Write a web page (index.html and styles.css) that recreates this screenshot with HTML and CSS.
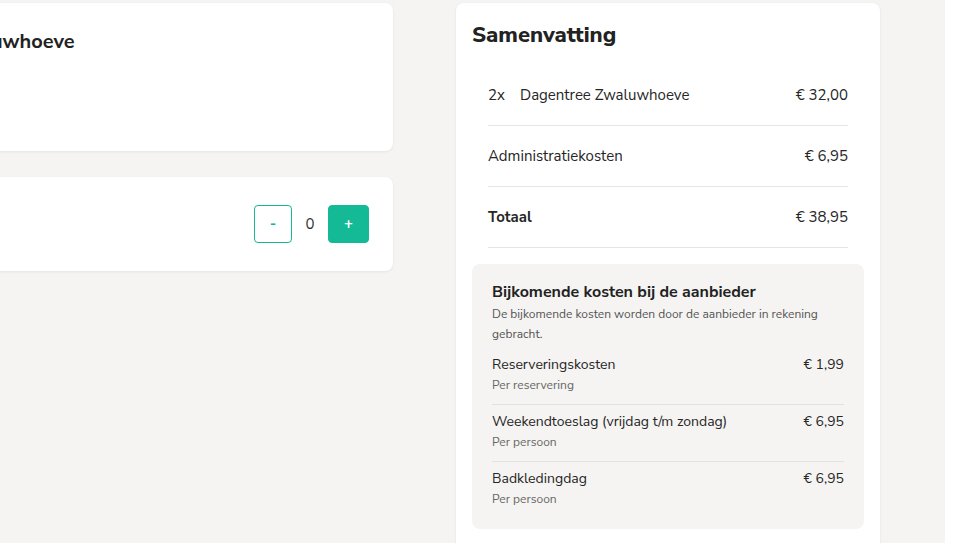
FILE: index.html
```html
<!DOCTYPE html>
<html lang="nl">
<head>
<meta charset="utf-8">
<title>Samenvatting</title>
<link rel="stylesheet" href="styles.css">
</head>
<body>
<div class="page">
  <div class="layout">
    <div class="left">
      <section class="card card-info">
        <h2 class="card-title">Dagentree Zwaluwhoeve</h2>
      </section>
      <section class="card card-ticket">
        <div class="stepper">
          <button class="step step-minus" type="button">-</button>
          <span class="step-value">0</span>
          <button class="step step-plus" type="button">+</button>
        </div>
      </section>
    </div>
    <aside class="card summary">
      <h2 class="summary-title">Samenvatting</h2>
      <div class="rows">
        <div class="row">
          <span class="row-label"><span class="qty">2x</span>Dagentree Zwaluwhoeve</span>
          <span class="row-price">€ 32,00</span>
        </div>
        <div class="row">
          <span class="row-label">Administratiekosten</span>
          <span class="row-price">€ 6,95</span>
        </div>
        <div class="row row-total">
          <span class="row-label">Totaal</span>
          <span class="row-price">€ 38,95</span>
        </div>
      </div>
      <div class="extras">
        <h3 class="extras-title">Bijkomende kosten bij de aanbieder</h3>
        <p class="extras-desc">De bijkomende kosten worden door de aanbieder in rekening gebracht.</p>
        <div class="extra">
          <div class="extra-main"><span>Reserveringskosten</span><span>€ 1,99</span></div>
          <div class="extra-sub">Per reservering</div>
        </div>
        <div class="extra">
          <div class="extra-main"><span>Weekendtoeslag (vrijdag t/m zondag)</span><span>€ 6,95</span></div>
          <div class="extra-sub">Per persoon</div>
        </div>
        <div class="extra">
          <div class="extra-main"><span>Badkledingdag</span><span>€ 6,95</span></div>
          <div class="extra-sub">Per persoon</div>
        </div>
      </div>
    </aside>
  </div>
</div>
</body>
</html>
```
FILE: styles.css
```css
* { box-sizing: border-box; }
html, body { margin: 0; padding: 0; }
body {
  background: #ffffff;
  font-family: "Nunito Sans", Lato, "Open Sans", sans-serif;
  color: #262626;
  overflow: hidden;
}
.page {
  width: 945px;
  height: 543px;
  background: #f5f4f2;
  overflow: hidden;
}
.layout {
  display: flex;
  align-items: flex-start;
  gap: 63px;
  margin-left: -182px;
  padding-top: 3px;
}
.left {
  width: 575px;
  flex: none;
  display: flex;
  flex-direction: column;
  gap: 26px;
}
.card {
  background: #ffffff;
  border-radius: 8px;
  box-shadow: 0 1px 3px rgba(0, 0, 0, 0.07);
}
.card-info {
  height: 148px;
  padding: 24px;
}
.card-title {
  margin: 0;
  font-size: 20px;
  line-height: 30px;
  font-weight: 700;
  color: #222;
}
.card-ticket {
  height: 94px;
  padding: 0 24px;
  display: flex;
  align-items: center;
  justify-content: flex-end;
}
.stepper {
  display: flex;
  align-items: center;
}
.step {
  height: 38px;
  border-radius: 4px;
  border: 1px solid #14b996;
  font-family: inherit;
  font-size: 15px;
  font-weight: 700;
  padding: 0;
  display: flex;
  align-items: center;
  justify-content: center;
}
.step-minus {
  width: 38px;
  background: #fff;
  color: #14b996;
}
.step-plus {
  width: 41px;
  background: #14b996;
  color: #fff;
}
.step-value {
  width: 36px;
  text-align: center;
  font-size: 15px;
  color: #333;
}
.summary {
  width: 424px;
  flex: none;
  padding: 16px 16px 40px;
}
.summary-title {
  margin: 0 0 14px;
  font-size: 22px;
  line-height: 32px;
  font-weight: 800;
  color: #222;
}
.rows {
  padding: 0 16px;
}
.row {
  height: 61px;
  border-bottom: 1px solid #e5e5e5;
  display: flex;
  align-items: center;
  justify-content: space-between;
  font-size: 15px;
  color: #262626;
}
.qty {
  display: inline-block;
  width: 32px;
}
.row-total .row-label {
  font-weight: 700;
}
.extras {
  margin-top: 16px;
  background: #f5f4f2;
  border-radius: 8px;
  padding: 20px;
}
.extras-title {
  margin: 0 0 4px;
  font-size: 16px;
  line-height: 16px;
  font-weight: 700;
  color: #222;
}
.extras-desc {
  margin: 0 0 4px;
  font-size: 12px;
  line-height: 20px;
  color: #555;
}
.extra {
  padding: 7px 0 9px;
  border-bottom: 1px solid #e3e2e0;
}
.extra:last-child {
  border-bottom: none;
  padding-bottom: 0;
}
.extra-main {
  display: flex;
  justify-content: space-between;
  font-size: 14px;
  line-height: 20px;
  color: #262626;
}
.extra-sub {
  font-size: 12px;
  line-height: 20px;
  color: #666;
}
```
